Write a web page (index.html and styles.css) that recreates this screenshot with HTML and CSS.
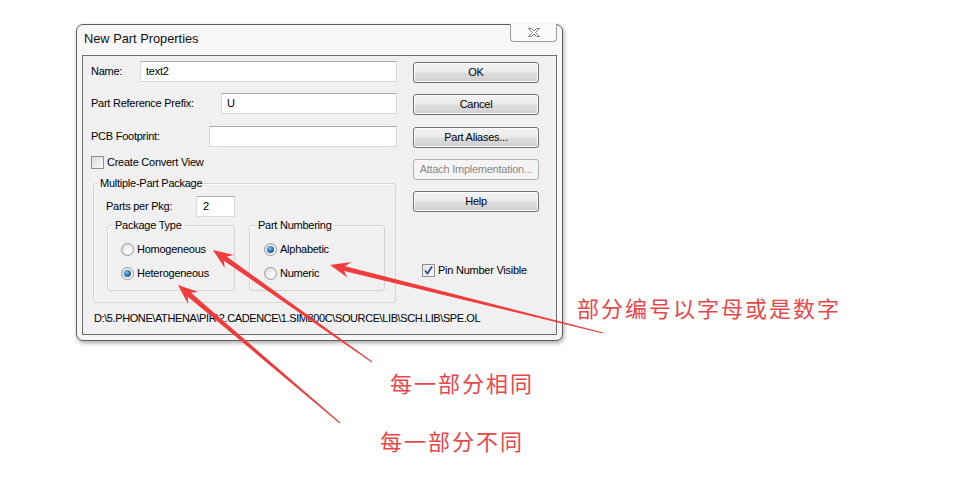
FILE: index.html
```html
<!DOCTYPE html>
<html>
<head>
<meta charset="utf-8">
<link rel="stylesheet" href="styles.css">
</head>
<body>
<div class="window">
  <div class="titlebar">
    <span class="title">New Part Properties</span>
    <span class="close">
      <svg width="14" height="11" viewBox="0 0 14 11"><path d="M1.5 1.5h3l2.5 2.5 2.5-2.5h3l-4 4 4 4h-3l-2.5-2.5-2.5 2.5h-3l4-4z" fill="#fff" stroke="#7d7d7d" stroke-width="1" stroke-linejoin="round"/></svg>
    </span>
  </div>
  <div class="client">
    <div class="left">
      <div class="row r-name"><label class="lbl w-name">Name:</label><div class="input i-name">text2</div></div>
      <div class="row r-prefix"><label class="lbl w-prefix">Part Reference Prefix:</label><div class="input i-prefix">U</div></div>
      <div class="row r-pcb"><label class="lbl w-pcb">PCB Footprint:</label><div class="input i-pcb"></div></div>
      <div class="check-row r-convert"><span class="checkbox"></span><span class="ctext">Create Convert View</span></div>
      <fieldset class="group main-group">
        <legend class="legend">Multiple-Part Package</legend>
        <div class="row r-parts"><label class="lbl w-parts">Parts per Pkg:</label><div class="input i-parts">2</div></div>
        <div class="subgroups">
          <fieldset class="group sub pkg">
            <legend class="legend">Package Type</legend>
            <div class="radio-row"><span class="radio"></span><span class="rtext">Homogeneous</span></div>
            <div class="radio-row second"><span class="radio on"></span><span class="rtext">Heterogeneous</span></div>
          </fieldset>
          <fieldset class="group sub num">
            <legend class="legend">Part Numbering</legend>
            <div class="radio-row"><span class="radio on"></span><span class="rtext">Alphabetic</span></div>
            <div class="radio-row second"><span class="radio"></span><span class="rtext">Numeric</span></div>
          </fieldset>
        </div>
      </fieldset>
      <div class="path">D:\5.PHONE\ATHENA\PIR\2.CADENCE\1.SIM800C\SOURCE\LIB\SCH.LIB\SPE.OL</div>
    </div>
    <div class="right">
      <div class="btn b-ok">OK</div>
      <div class="btn b-cancel">Cancel</div>
      <div class="btn b-alias">Part Aliases...</div>
      <div class="btn b-attach disabled">Attach Implementation...</div>
      <div class="btn b-help">Help</div>
      <div class="check-row r-pin"><span class="checkbox checked"><svg width="11" height="11" viewBox="0 0 11 11"><path d="M2 5.5l2.5 3 4.5-7" fill="none" stroke="#2a4b8d" stroke-width="1.8"/></svg></span><span class="ctext">Pin Number Visible</span></div>
    </div>
  </div>
</div>

<svg class="arrows" width="971" height="487" viewBox="0 0 971 487">
  <polygon fill="#ef3d3d" points="213,250 233.96,254.98 226.70,256.60 372.29,361.59 371.71,362.41 223.82,260.68 224.74,268.06"/>
  <polygon fill="#ef3d3d" points="178,285 198.42,291.88 191.04,292.83 340.32,422.62 339.68,423.38 187.80,296.63 188.04,304.06"/>
  <polygon fill="#ef3d3d" points="330,265 351.34,262.07 345.16,266.20 603.12,332.51 602.88,333.49 343.96,271.06 347.48,277.59"/>
</svg>
<div class="note n1">部分编号以字母或是数字</div>
<div class="note n2">每一部分相同</div>
<div class="note n3">每一部分不同</div>
</body>
</html>
```
FILE: styles.css
```css
html, body {
  margin: 0;
  padding: 0;
}
body {
  width: 971px;
  height: 487px;
  background: #ffffff;
  position: relative;
  overflow: hidden;
  font-family: "Liberation Sans", Arial, sans-serif;
  font-size: 11px;
  letter-spacing: -0.25px;
  color: #000;
}
.window {
  margin: 24px 0 0 76px;
  width: 487px;
  height: 317px;
  box-sizing: border-box;
  border: 1px solid #5f5f5f;
  border-radius: 7px;
  background: #f7f7f7;
  box-shadow: 1px 2px 4px rgba(0, 0, 0, 0.35);
  padding: 0 5px 5px 5px;
  display: flex;
  flex-direction: column;
}
.titlebar {
  height: 30px;
  display: flex;
  justify-content: space-between;
  align-items: flex-start;
}
.title {
  padding: 6px 0 0 2px;
  line-height: 15px;
  font-size: 12.8px;
  letter-spacing: 0;
  color: #111;
}
.close {
  width: 45px;
  height: 17px;
  margin-top: -1px;
  border: 1px solid #9c9c9c;
  border-top: none;
  border-radius: 0 0 4px 4px;
  background: #fbfbfb;
  display: flex;
  align-items: center;
  justify-content: center;
}
.client {
  flex: 1;
  border: 1px solid #6e6e6e;
  background: #f0f0f0;
  display: flex;
}
.left {
  width: 314px;
  box-sizing: border-box;
  padding-left: 8px;
}
.row {
  display: flex;
  align-items: center;
  height: 21px;
}
.lbl {
  flex: none;
  line-height: 13px;
}
.input {
  box-sizing: border-box;
  height: 21px;
  background: #fff;
  border: 1px solid #d6d9de;
  border-top-color: #abadb3;
  padding: 0 5px;
  line-height: 19px;
}
.r-name { margin-top: 5px; }
.w-name { width: 49px; }
.i-name { width: 257px; }
.r-prefix { margin-top: 11px; }
.w-prefix { width: 130px; }
.i-prefix { width: 176px; }
.r-pcb { margin-top: 12px; }
.w-pcb { width: 118px; }
.i-pcb { width: 188px; }

.check-row {
  display: flex;
  align-items: center;
  height: 13px;
}
.r-convert { margin-top: 9px; }
.checkbox {
  width: 13px;
  height: 13px;
  box-sizing: border-box;
  border: 1px solid #8e8f8f;
  background: linear-gradient(135deg, #dcdcdc, #f8f8f8);
  display: flex;
  align-items: center;
  justify-content: center;
  flex: none;
}
.checkbox.checked {
  background: linear-gradient(135deg, #e1e6ee, #fafbfd);
}
.ctext {
  margin-left: 3px;
  line-height: 13px;
}

.group {
  margin: 0;
  padding: 0;
  border: 1px solid #d4d4d4;
  border-radius: 3px;
  box-shadow: inset 1px 1px 0 #fbfbfb;
  min-width: 0;
}
.legend {
  line-height: 14px;
  padding: 0 2px;
  margin-left: 4px;
}
.main-group {
  margin: 7px 0 0 2px;
  width: 303px;
  box-sizing: border-box;
  padding-bottom: 11px;
}
.r-parts {
  margin-top: 6px;
  padding-left: 12px;
}
.w-parts { width: 90px; }
.i-parts { width: 39px; padding-left: 6px; }
.subgroups {
  display: flex;
  margin-top: 1px;
  padding-left: 13px;
}
.sub {
  box-sizing: border-box;
  padding: 11px 0 10px 0;
}
.pkg { width: 128px; }
.num { width: 136px; margin-left: 14px; }
.pkg .legend { margin-left: 5px; }
.num .legend { margin-left: 6px; }
.pkg .radio-row { margin-left: 13px; }
.num .radio-row { margin-left: 14px; }
.radio-row {
  display: flex;
  align-items: center;
  height: 13px;
}
.radio-row.second { margin-top: 11px; }
.radio {
  width: 13px;
  height: 13px;
  box-sizing: border-box;
  border-radius: 50%;
  border: 1px solid #9a9a9a;
  background: radial-gradient(circle at 65% 65%, #ffffff 0%, #ececec 50%, #d2d2d2 100%);
  flex: none;
  position: relative;
}
.radio.on::after {
  content: "";
  position: absolute;
  left: 2px;
  top: 2px;
  width: 7px;
  height: 7px;
  border-radius: 50%;
  background: radial-gradient(circle at 40% 35%, #8fc6ee 0%, #2f77b8 45%, #163e6b 100%);
}
.rtext {
  margin-left: 3px;
  line-height: 13px;
}
.path {
  margin: 9px 0 0 3px;
  line-height: 13px;
  font-size: 11px;
  letter-spacing: -0.4px;
  white-space: nowrap;
}

.right {
  width: 126px;
  margin-left: 16px;
  padding-top: 6px;
}
.btn {
  box-sizing: border-box;
  height: 21px;
  border: 1px solid #707070;
  border-radius: 3px;
  background: linear-gradient(#f3f3f3 0%, #ebebeb 48%, #dddddd 52%, #cfcfcf 100%);
  box-shadow: inset 0 0 0 1px #fcfcfc;
  text-align: center;
  line-height: 19px;
  color: #000;
}
.b-cancel { margin-top: 11px; }
.b-alias { margin-top: 12px; }
.b-attach { margin-top: 11px; }
.b-help { margin-top: 11px; }
.btn.disabled {
  border-color: #adb2b5;
  background: #f4f4f4;
  color: #8a8a8a;
  box-shadow: none;
}
.r-pin {
  margin-top: 52px;
  margin-left: 9px;
}

.arrows {
  position: absolute;
  left: 0;
  top: 0;
  pointer-events: none;
}
.note {
  position: absolute;
  font-family: "Noto Sans CJK SC", sans-serif;
  font-size: 22px;
  letter-spacing: 2px;
  line-height: 26px;
  color: #e8474a;
  white-space: nowrap;
}
.n1 { left: 577px; top: 294px; }
.n2 { left: 390px; top: 369px; }
.n3 { left: 380px; top: 427px; }
```
